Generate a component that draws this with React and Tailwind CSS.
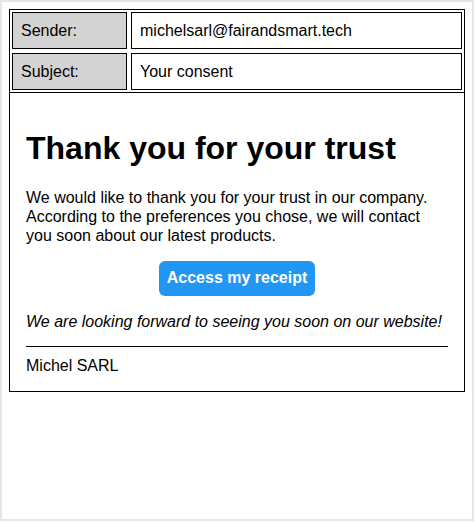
import React from "react";

const App = () => {
  return (
    <div className="w-[474px] h-[521px] border-2 border-[#e6e6e6] bg-white pt-[7px] pl-[7px] font-['Liberation_Sans',Arial,sans-serif] text-[16px] text-black">
      <div className="w-[456px] border border-black">
        {/* header fields */}
        <div className="flex flex-col gap-[4px] p-[2px] border-b border-black">
          <div className="flex gap-[4px]">
            <div className="w-[115px] h-[37px] border border-black bg-[#d3d3d3] flex items-center px-[8px]">
              Sender:
            </div>
            <div className="w-[331px] h-[37px] border border-black flex items-center px-[8px]">
              michelsarl@fairandsmart.tech
            </div>
          </div>
          <div className="flex gap-[4px]">
            <div className="w-[115px] h-[37px] border border-black bg-[#d3d3d3] flex items-center px-[8px]">
              Subject:
            </div>
            <div className="w-[331px] h-[37px] border border-black flex items-center px-[8px]">
              Your consent
            </div>
          </div>
        </div>

        {/* body */}
        <div className="px-[16px] pt-[37px] pb-[15px]">
          <h1 className="text-[32px] font-bold leading-[37px]">
            Thank you for your trust
          </h1>
          <p className="mt-[21px] leading-[19px]">
            We would like to thank you for your trust in our company.
            According to the preferences you chose, we will contact you soon
            about our latest products.
          </p>
          <div className="flex justify-center mt-[16px]">
            <button className="bg-[#2196f3] text-white font-bold rounded-[6px] px-[8px] h-[35px] leading-[18.4px]">
              Access my receipt
            </button>
          </div>
          <p className="mt-[17px] italic leading-[18.4px]">
            We are looking forward to seeing you soon on our website!
          </p>
          <hr className="mt-[15px] border-t border-black" />
          <p className="mt-[10px] leading-[18.4px]">Michel SARL</p>
        </div>
      </div>
    </div>
  );
};

export default App;
